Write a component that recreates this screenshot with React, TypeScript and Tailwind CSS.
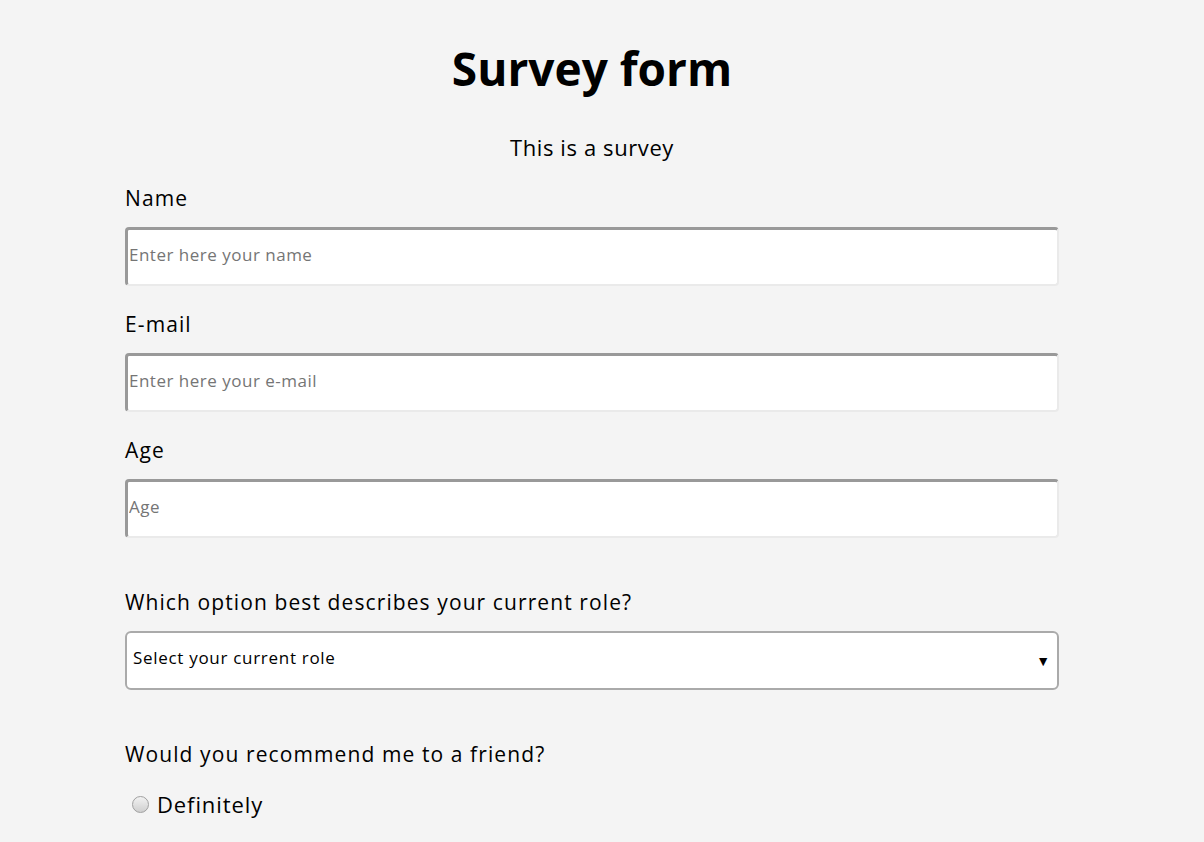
const inputCls =
  "w-full h-[59px] bg-white rounded-sm border-t-[3px] border-l-[3px] border-r-2 border-b-2 border-t-[#999] border-l-[#999] border-r-[#eaeaea] border-b-[#eaeaea] px-[1px] pb-[6px] text-[17px] tracking-[0.5px] text-black placeholder:text-[#757575] outline-none";

const Field = ({ label, placeholder, type = "text" }: { label: string; placeholder: string; type?: string }) => (
  <div className="flex flex-col">
    <label className="text-[21px] leading-[28px] tracking-[1.1px] text-black mb-[15px]">{label}</label>
    <input type={type} placeholder={placeholder} className={inputCls} style={{ fontFamily: "'Open Sans', sans-serif" }} />
  </div>
);

export default function App() {
  return (
    <div className="min-h-screen bg-[#f4f4f4] text-black" style={{ fontFamily: "'Open Sans', Lato, sans-serif" }}>
      <div className="w-[934px] ml-[125px] pt-[38px] pb-10">
        <h1 className="text-center text-[46px] leading-[60px] font-bold">Survey form</h1>
        <p className="text-center text-[22px] leading-[30px] tracking-[0.6px] mt-[34px]">This is a survey</p>

        <form className="flex flex-col mt-[22px]">
          <div className="flex flex-col gap-[24px]">
            <Field label="Name" placeholder="Enter here your name" />
            <Field label="E-mail" placeholder="Enter here your e-mail" type="email" />
            <Field label="Age" placeholder="Age" type="number" />
          </div>

          <div className="flex flex-col mt-[50px]">
            <label className="text-[21px] leading-[28px] tracking-[1.1px] mb-[15px]">Which option best describes your current role?</label>
            <div className="relative">
              <select
                defaultValue=""
                className="appearance-none w-full h-[59px] bg-white border-2 border-[#aaa] rounded-md pl-[6px] pb-[5px] text-[17px] tracking-[0.7px] text-black outline-none"
                style={{ fontFamily: "'Open Sans', sans-serif" }}
              >
                <option value="" disabled>Select your current role</option>
                <option>Student</option>
                <option>Full time job</option>
                <option>Other</option>
              </select>
              <span className="pointer-events-none absolute right-[9px] top-1/2 -translate-y-1/2 text-[14px] leading-none">▼</span>
            </div>
          </div>

          <div className="flex flex-col mt-[50px]">
            <p className="text-[21px] leading-[28px] tracking-[1.1px] mb-[22px]">Would you recommend me to a friend?</p>
            <label className="flex items-center gap-[8px] pl-[7px] text-[22px] leading-[28px] tracking-[0.9px]">
              <input
                type="radio"
                name="rec"
                className="appearance-none w-[17px] h-[17px] m-0 rounded-full border border-[#a0a0a0] bg-gradient-to-b from-[#f2f2f2] to-[#cfcfcf]"
              />
              Definitely
            </label>
          </div>
        </form>
      </div>
    </div>
  );
}
